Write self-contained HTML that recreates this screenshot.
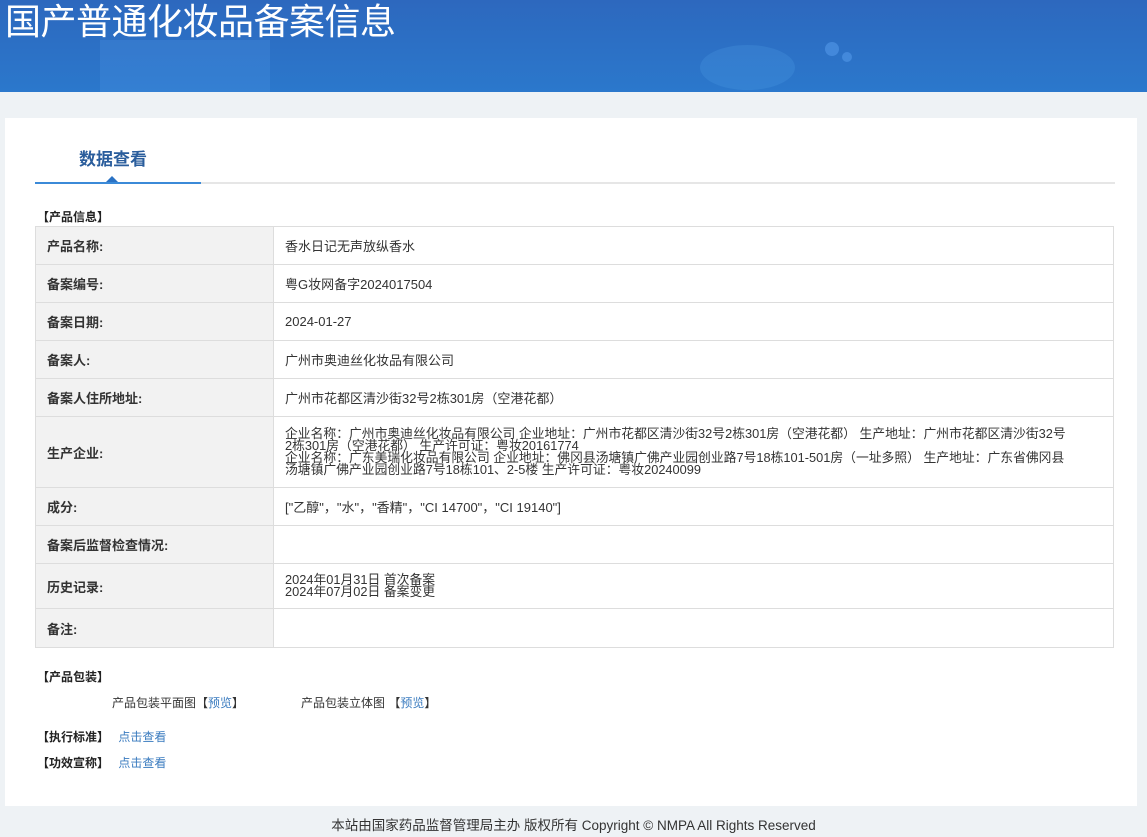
<!DOCTYPE html>
<html><head><meta charset="utf-8"><style>
*{margin:0;padding:0;box-sizing:border-box}
body{width:1147px;height:837px;background:#eef2f5;font-family:"Liberation Sans","Noto Sans CJK SC",sans-serif;color:#333;position:relative;overflow:hidden;font-size:13px}
.hdr{position:absolute;left:0;top:0;width:1147px;height:92px;background:linear-gradient(180deg,#2d68be 0%,#2b78cc 100%);overflow:hidden}
.hdr h1{position:absolute;left:5px;top:1px;font-size:36px;font-weight:normal;color:#fff;letter-spacing:-0.5px;line-height:42px}
.panel{position:absolute;left:5px;top:118px;width:1132px;height:688px;background:#fff}
.tab{position:absolute;left:74px;top:27px;font-size:17px;font-weight:bold;color:#2a5d9c}
.line{position:absolute;left:30px;top:64px;width:1080px;height:2px;background:#e6e6e6}
.line2{position:absolute;left:30px;top:64px;width:166px;height:2px;background:#3b8ad8}
.tri{position:absolute;left:101px;top:58px;width:0;height:0;border-left:6px solid transparent;border-right:6px solid transparent;border-bottom:6px solid #2a72c4}
.sec{position:absolute;font-weight:bold;font-size:12px;color:#222}
table{position:absolute;left:30px;top:108px;width:1079px;border-collapse:collapse;border:1px solid #a9bfd8;table-layout:fixed}
td{border:1px solid #ddd;font-size:13px;color:#333;padding:0 11px;vertical-align:middle}
td.l{width:238px;background:#f2f2f2;font-weight:bold;color:#333}
td.v{line-height:12px;white-space:nowrap;overflow:hidden;font-size:12.8px}
a{color:#3a7bbf;text-decoration:none}
.t{position:absolute;font-size:12px;color:#333}
.foot{position:absolute;left:0;top:814px;width:1147px;text-align:center;font-size:13.5px;color:#333}
</style></head><body>
<div class="hdr">
<div style="position:absolute;left:100px;top:40px;width:170px;height:60px;background:rgba(80,150,230,.25)"></div>
<div style="position:absolute;left:700px;top:45px;width:95px;height:45px;border-radius:50%;background:rgba(80,160,230,.25)"></div>
<div style="position:absolute;left:825px;top:42px;width:14px;height:14px;border-radius:50%;background:rgba(90,160,240,.5)"></div>
<div style="position:absolute;left:842px;top:52px;width:10px;height:10px;border-radius:50%;background:rgba(90,160,240,.5)"></div>
<h1>国产普通化妆品备案信息</h1></div>
<div class="panel">
<div class="tab">数据查看</div>
<div class="line"></div><div class="line2"></div><div class="tri"></div>
<div class="sec" style="left:32px;top:90px">【产品信息】</div>
<table>
<tr style="height:38px"><td class="l">产品名称:</td><td>香水日记无声放纵香水</td></tr>
<tr style="height:38px"><td class="l">备案编号:</td><td>粤G妆网备字2024017504</td></tr>
<tr style="height:38px"><td class="l">备案日期:</td><td>2024-01-27</td></tr>
<tr style="height:38px"><td class="l">备案人:</td><td>广州市奥迪丝化妆品有限公司</td></tr>
<tr style="height:38px"><td class="l">备案人住所地址:</td><td>广州市花都区清沙街32号2栋301房（空港花都）</td></tr>
<tr style="height:71px"><td class="l">生产企业:</td><td class="v">企业名称：广州市奥迪丝化妆品有限公司 企业地址：广州市花都区清沙街32号2栋301房（空港花都） 生产地址：广州市花都区清沙街32号<br>2栋301房（空港花都） 生产许可证：粤妆20161774<br>企业名称：广东美瑞化妆品有限公司 企业地址：佛冈县汤塘镇广佛产业园创业路7号18栋101-501房（一址多照） 生产地址：广东省佛冈县<br>汤塘镇广佛产业园创业路7号18栋101、2-5楼 生产许可证：粤妆20240099</td></tr>
<tr style="height:38px"><td class="l">成分:</td><td>["乙醇"，"水"，"香精"，"CI 14700"，"CI 19140"]</td></tr>
<tr style="height:38px"><td class="l">备案后监督检查情况:</td><td></td></tr>
<tr style="height:45px"><td class="l">历史记录:</td><td class="v">2024年01月31日 首次备案<br>2024年07月02日 备案变更</td></tr>
<tr style="height:39px"><td class="l">备注:</td><td></td></tr>
</table>
<div class="sec" style="left:32px;top:550px">【产品包装】</div>
<div class="t" style="left:107px;top:576px">产品包装平面图【<a>预览</a>】</div>
<div class="t" style="left:296px;top:576px">产品包装立体图 【<a>预览</a>】</div>
<div class="sec" style="left:32px;top:610px">【执行标准】 <a style="font-weight:normal;margin-left:6px">点击查看</a></div>
<div class="sec" style="left:32px;top:636px">【功效宣称】 <a style="font-weight:normal;margin-left:6px">点击查看</a></div>
</div>
<div class="foot">本站由国家药品监督管理局主办 版权所有 Copyright © NMPA All Rights Reserved</div>
</body></html>
